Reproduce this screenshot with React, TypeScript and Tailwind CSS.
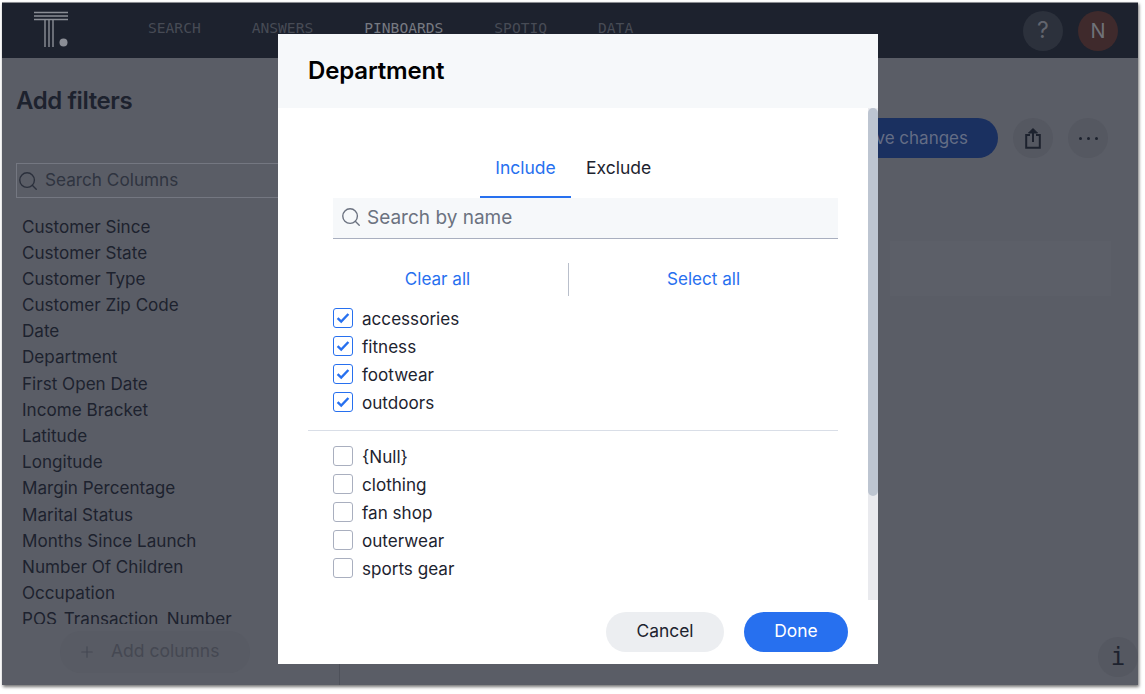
import React from "react";
import { Search, Plus } from "lucide-react";

const cols = ["Customer Since","Customer State","Customer Type","Customer Zip Code","Date","Department","First Open Date","Income Bracket","Latitude","Longitude","Margin Percentage","Marital Status","Months Since Launch","Number Of Children","Occupation","POS_Transaction_Number"];

function Box({ checked }: { checked?: boolean }) {
  return (
    <span className={`w-5 h-5 rounded-[3px] border flex items-center justify-center shrink-0 ${checked ? "border-[#2770ef]" : "border-[#a9afbf]"}`}>
      {checked && (
        <svg width="14" height="12" viewBox="0 0 14 12" fill="none">
          <path d="M1.6 6.2 L5.2 9.6 L12.4 2" stroke="#2770ef" strokeWidth="2.4" />
        </svg>
      )}
    </span>
  );
}

function Row({ label, checked }: { label: string; checked?: boolean }) {
  return (
    <div className="h-7 flex items-center gap-[9px] text-[17.1px] text-[#1d232f]">
      <Box checked={checked} />
      <span className="pt-[1px]">{label}</span>
    </div>
  );
}

export default function App() {
  return (
    <div className="relative w-[1145px] h-[694px] bg-white overflow-hidden font-['Inter',sans-serif]">
      <div className="ml-[2px] mt-[2px] w-[1136px] h-[683px] bg-[#5a5d66] flex flex-col shadow-[1px_2px_3px_rgba(0,0,0,0.55)] border-t border-[#8b8d92]">
        <header className="h-[55px] shrink-0 bg-[#1d222e] flex items-center">
          <svg className="ml-[30px] mb-[3px] shrink-0" width="38" height="38" viewBox="0 0 38 38" fill="none" stroke="#8b8e96" strokeWidth="1.4">
            <path d="M2 2.5H36M2 6H36M2 9.5H36" />
            <path d="M13 10V37M17 10V37M21 10V37" />
            <circle cx="31.5" cy="32.5" r="4" fill="#8b8e96" stroke="none" />
          </svg>
          <nav className="ml-[78px] flex gap-[51px] font-['DejaVu_Sans_Mono',monospace] text-[14.6px] text-[#474b55] mb-[6px]">
            <span>SEARCH</span>
            <span>ANSWERS</span>
            <span className="text-[#767981]">PINBOARDS</span>
            <span>SPOTIQ</span>
            <span>DATA</span>
          </nav>
          <div className="ml-auto mr-[20px] flex gap-[15px]">
            <div className="w-10 h-10 rounded-full bg-[#2c313c] text-[#62656e] text-[23px] flex items-center justify-center">?</div>
            <div className="w-10 h-10 rounded-full bg-[#3f2a2c] text-[#6f7278] text-[20px] flex items-center justify-center">N</div>
          </div>
        </header>
        <div className="flex-1 flex min-h-0">
          <aside className="w-[338px] shrink-0 border-r border-[#4e515a] pl-[14px] flex flex-col">
            <h1 className="mt-[28px] text-[24px] leading-[30px] font-semibold tracking-[-0.4px] text-[#1d222e]">Add filters</h1>
            <div className="mt-[47px] h-[35px] w-[322px] shrink-0 border border-[#747781] flex items-center gap-[6px] text-[17.2px] text-[#2f3440]">
              <Search size={22} strokeWidth={1.5} className="text-[#2b303c]" />
              <span className="-mt-[2px]">Search Columns</span>
            </div>
            <div className="mt-[15.5px] ml-[6px] h-[410.5px] shrink-0 overflow-hidden text-[17.1px] text-[#1d222e]">
              {cols.map((c) => (
                <div key={c} className="h-[26.2px] leading-[26.2px] whitespace-nowrap">{c}</div>
              ))}
            </div>
            <div className="mt-[7px] ml-[44px] w-[190px] h-[42px] shrink-0 rounded-full bg-[#585b64] flex items-center pl-[18px] gap-[15px] text-[17.5px] text-[#454852]">
              <Plus size={18} strokeWidth={1.5} />
              <span className="-mt-[2px]">Add columns</span>
            </div>
          </aside>
          <main className="flex-1 flex flex-col items-end pr-[27px]">
            <div className="mt-[60px] flex items-center gap-[15px] mr-[3px]">
              <div className="w-[400px] h-10 rounded-full bg-[#1a3060] text-[#646d85] text-[17px] flex items-center justify-end pr-[30px] pt-[1px]">Save changes</div>
              <div className="w-10 h-10 rounded-full bg-[#555861] flex items-center justify-center">
                <svg width="16" height="22" viewBox="0 0 16 22" fill="none" stroke="#1d222e" strokeWidth="2">
                  <path d="M5 8H1.2V20.8H14.8V8H11" />
                  <path d="M8 15V2" />
                  <path d="M3.5 6 L8 1.5 L12.5 6 Z" fill="#1d222e" strokeWidth="1" />
                </svg>
              </div>
              <div className="w-10 h-10 rounded-full bg-[#555861] flex items-center justify-center gap-[5px]">
                <span className="w-[3px] h-[3px] rounded-full bg-[#1d222e]" />
                <span className="w-[3px] h-[3px] rounded-full bg-[#1d222e]" />
                <span className="w-[3px] h-[3px] rounded-full bg-[#1d222e]" />
              </div>
            </div>
            <div className="mt-[83px] w-[221px] h-[55px] bg-[#5c5f68]" />
            <div className="mt-auto mb-[8px] mr-[-27px] w-10 h-10 rounded-full bg-[#555861] flex items-center justify-center font-['DejaVu_Sans_Mono',monospace] text-[24px] text-[#1d222e]">i</div>
          </main>
        </div>
      </div>

      <div className="absolute left-[278px] top-[34px] w-[600px] h-[630px] bg-white flex flex-col">
        <div className="h-[74px] shrink-0 bg-[#f6f8fa] pl-[30px] flex items-center">
          <h2 className="text-[24px] font-semibold tracking-[-0.15px] text-black">Department</h2>
        </div>
        <div className="h-[492px] shrink-0 flex">
          <div className="w-[590px] pl-[55px] pr-[30px]">
            <div className="mt-[39px] ml-[147px] flex text-[17.5px] h-[51px]">
              <div className="w-[91px] h-[51px] pt-[10px] leading-[22px] text-center text-[#2770ef] border-b-2 border-[#2770ef]">Include</div>
              <div className="ml-[15px] h-[51px] pt-[10px] leading-[22px] text-[#1d232f]">Exclude</div>
            </div>
            <div className="h-[41px] bg-[#f6f8fa] border-b border-[#a9afbf] flex items-center pl-[7px] gap-[5px] text-[19px] text-[#6b7280]">
              <Search size={22} strokeWidth={1.5} className="text-[#6b7280] -mt-[2px]" />
              <span>Search by name</span>
            </div>
            <div className="mt-[24px] h-[33px] flex items-center text-[17.1px] text-[#2770ef]">
              <div className="w-[235px] pr-[26px] pb-[2px] text-center">Clear all</div>
              <div className="w-px h-[33px] bg-[#b9bfcb]" />
              <div className="w-[269px] pb-[2px] text-center">Select all</div>
            </div>
            <div className="mt-[8px]">
              <Row label="accessories" checked />
              <Row label="fitness" checked />
              <Row label="footwear" checked />
              <Row label="outdoors" checked />
            </div>
            <div className="-ml-[25px] mt-[14px] mb-[11px] h-px bg-[#d9dee7]" />
            <div>
              <Row label="{Null}" />
              <Row label="clothing" />
              <Row label="fan shop" />
              <Row label="outerwear" />
              <Row label="sports gear" />
            </div>
          </div>
          <div className="w-[10px] bg-[#e9eaee]">
            <div className="h-[388px] bg-[#bdc5d1] rounded-[5px]" />
          </div>
        </div>
        <div className="flex justify-end gap-[20px] pr-[30px] pt-[12px] text-[17.4px]">
          <div className="w-[118px] h-10 pb-[2px] rounded-full bg-[#eceef1] text-[#1d232f] flex items-center justify-center">Cancel</div>
          <div className="w-[104px] h-10 pb-[2px] rounded-full bg-[#2770ef] text-white flex items-center justify-center">Done</div>
        </div>
      </div>
    </div>
  );
}
